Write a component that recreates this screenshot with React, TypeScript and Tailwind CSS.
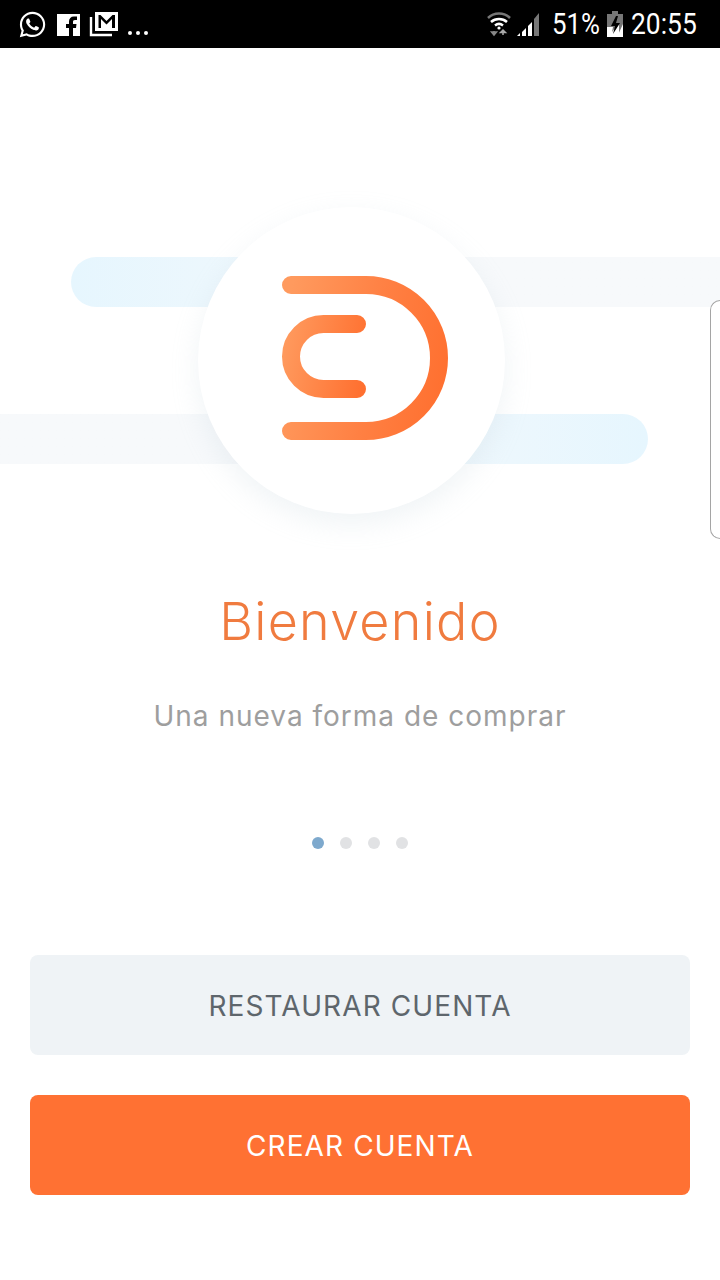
import React from 'react';
import { FaWhatsapp } from 'react-icons/fa';

const sans = 'font-["Inter","Liberation_Sans",sans-serif]';

const StatusBar = () => (
    <div className='flex h-12 items-center justify-between bg-black pl-[18px] pr-[23px] text-white font-["Roboto",sans-serif]'>
        <div className="flex items-center">
            <FaWhatsapp size={29} />
            <svg width="23" height="23" viewBox="0 0 23 23" className="ml-[10px]">
                <path fill="white" d="M0 1h23v22h-7v-8h3l.5-4H16V9c0-1.200.4-2 2-2h2V3.500h-3c-3.200 0-5 2-5 5V11H9v4h3v8H0z" />
            </svg>
            <svg width="30" height="26" viewBox="0 0 30 26" className="ml-[9px]">
                <path d="M2 6v18h21" fill="none" stroke="white" strokeWidth="2.400" />
                <path fillRule="evenodd" fill="white" d="M6 1h23v19H6z M9.500 4v13h2.500V8l5.500 5.500L23 8v9h3V4h-2.500l-6 6-6-6z" />
            </svg>
            <span className="ml-[9px] mt-[17px] flex gap-[4px]">
                <i className="size-[4px] rounded-full bg-white" />
                <i className="size-[4px] rounded-full bg-white" />
                <i className="size-[4px] rounded-full bg-white" />
            </span>
        </div>
        <div className="flex items-center">
            <svg width="24" height="26" viewBox="0 0 24 26">
                <path d="M1 7c6-6 16-6 22 0" fill="none" stroke="#777" strokeWidth="2.500" />
                <path d="M4 11c4.500-4 11.500-4 16 0" fill="none" stroke="white" strokeWidth="2.500" />
                <path d="M8 14.500c2.500-2 5.500-2 8 0" fill="none" stroke="white" strokeWidth="2.500" />
                <circle cx="12" cy="17" r="1.600" fill="white" />
                <path d="M7 20v3M4.500 21 7 24l2.500-3z" fill="none" stroke="#888" strokeWidth="1.500" />
                <path d="M16 24v-4M13.500 21.500 16 19l2.500 2.500z" fill="none" stroke="#aaa" strokeWidth="1.500" />
            </svg>
            <svg width="24" height="25" viewBox="0 0 24 25" className="ml-[6px]">
                <path d="M0 24h3v-3z" fill="white" />
                <path d="M5 24h4v-8l-4 4z" fill="white" />
                <path d="M11 24h4V10l-4 4z" fill="white" />
                <path d="M17 24h5V1l-5 6z" fill="#777" />
            </svg>
            <span className="ml-[11px] w-[49px] origin-left scale-x-[0.86] whitespace-nowrap text-[30px] leading-none">51%</span>
            <svg width="16" height="26" viewBox="0 0 16 26" className="ml-[6px]">
                <path d="M5 0h6v3h5v23H0V3h5z" fill="#777" />
                <path d="M0 16h6l-1 5 7-9v14H0z M16 13v13h-6z" fill="white" />
                <path d="M9 5 4 15h4l-2 8 7-11H9l2-7z" fill="black" />
            </svg>
            <span className="ml-[8px] w-[66px] origin-left scale-x-[0.88] whitespace-nowrap text-[30px] leading-none">20:55</span>
        </div>
    </div>
);

const Logo = () => (
    <svg width="166" height="164" viewBox="282 276 166 164">
        <defs>
            <linearGradient id="outer" gradientUnits="userSpaceOnUse" x1="282" y1="340" x2="448" y2="370">
                <stop offset="0" stopColor="#ff9a5e" />
                <stop offset="0.55" stopColor="#ff8043" />
                <stop offset="1" stopColor="#ff7030" />
            </linearGradient>
            <linearGradient id="inner" gradientUnits="userSpaceOnUse" x1="282" y1="350" x2="366" y2="365">
                <stop offset="0" stopColor="#ff9a5e" />
                <stop offset="1" stopColor="#ff7030" />
            </linearGradient>
        </defs>
        <path d="M291 285H366A73 73 0 0 1 366 431H291" fill="none" stroke="url(#outer)" strokeWidth="18" strokeLinecap="round" />
        <path d="M357 324H323.500A32.500 32.500 0 0 0 323.500 389H357" fill="none" stroke="url(#inner)" strokeWidth="18" strokeLinecap="round" />
    </svg>
);

const Hero = () => (
    <div className="relative h-[507px] pt-[209px]">
        <div className="ml-[71px] h-[50px] rounded-l-full bg-gradient-to-r from-[#e6f6fe] to-[#f7f9fb] to-60%" />
        <div className="mr-[72px] mt-[107px] h-[50px] rounded-r-full bg-gradient-to-r from-[#f7f9fb] from-40% to-[#e6f6fe]" />
        <div className="absolute left-[198px] top-[159px] flex size-[307px] items-center justify-center rounded-full bg-white pb-[6px] pl-[26px] shadow-[0_10px_28px_rgba(180,198,212,0.2)]">
            <Logo />
        </div>
        <div className="absolute right-0 top-[252px] h-[239px] w-[10px] rounded-l-[10px] border border-r-0 border-[#a5a5a5] bg-white" />
    </div>
);

export default function App() {
    return (
        <div className={`flex h-[1280px] w-[720px] flex-col overflow-hidden bg-white ${sans}`}>
            <StatusBar />
            <Hero />
            <h1 className="mt-[29px] text-center text-[52px] font-light leading-[76px] tracking-[1.3px] text-[#f07b3f]">Bienvenido</h1>
            <p className="mt-[35px] text-center text-[28px] leading-[42px] tracking-[1px] text-[#9e9e9e]">Una nueva forma de comprar</p>
            <div className="mt-[100px] flex justify-center gap-4">
                <span className="size-3 rounded-full bg-[#7ea9cd]" />
                <span className="size-3 rounded-full bg-[#e1e2e4]" />
                <span className="size-3 rounded-full bg-[#e1e2e4]" />
                <span className="size-3 rounded-full bg-[#e1e2e4]" />
            </div>
            <div className="mt-[106px] flex flex-col gap-10 px-[30px]">
                <button className="h-[100px] rounded-lg bg-[#eff3f6] pt-[2px] text-[28px] tracking-[1.1px] text-[#5e666c]">RESTAURAR CUENTA</button>
                <button className="h-[100px] rounded-lg bg-[#ff7133] pt-[2px] text-[28px] tracking-[1.1px] text-white">CREAR CUENTA</button>
            </div>
        </div>
    );
}
